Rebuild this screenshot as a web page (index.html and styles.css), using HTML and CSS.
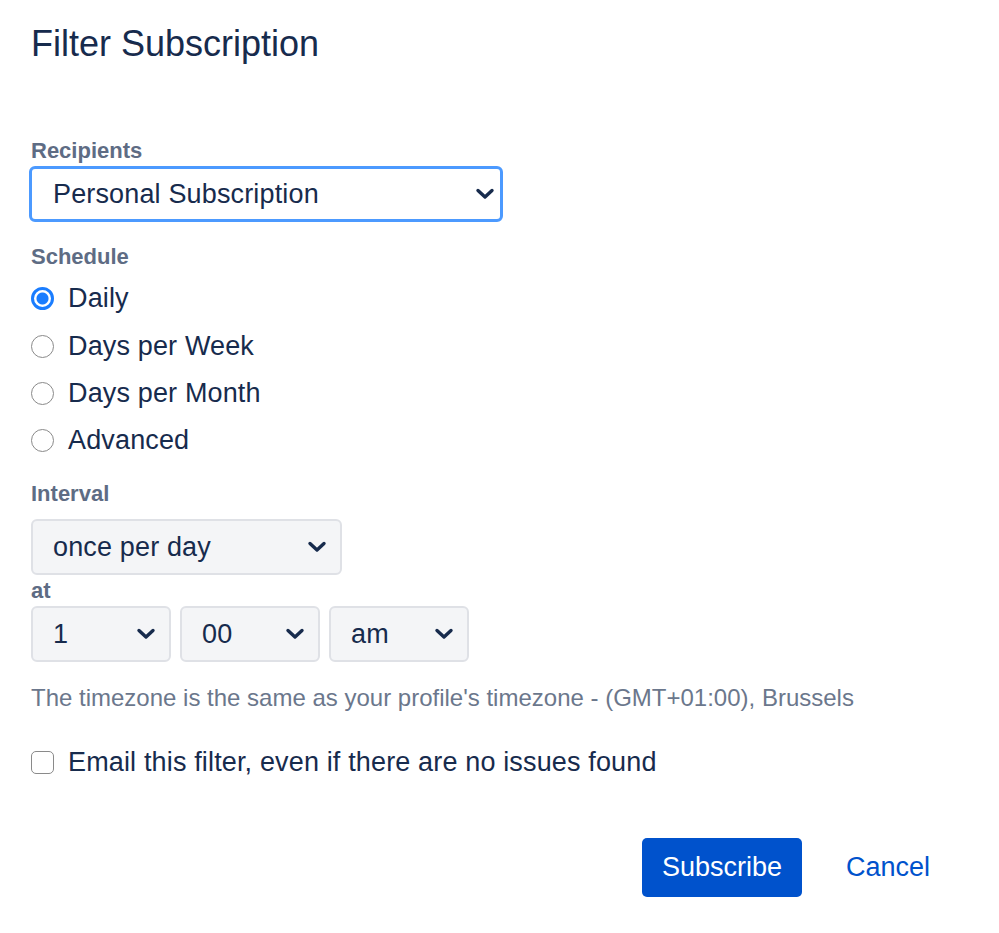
FILE: index.html
```html
<!DOCTYPE html>
<html lang="en">
<head>
    <meta charset="UTF-8">
    <meta name="viewport" content="width=device-width, initial-scale=1.0">
    <title>Filter Subscription</title>
    <link rel="stylesheet" href="styles.css">
</head>
<body>
    <h1 class="title">Filter Subscription</h1>

    <form class="sub-form">
        <label class="field-label label-recipients" for="recipients">Recipients</label>
        <div class="select-wrap select-wide">
            <select id="recipients" class="select focused">
                <option>Personal Subscription</option>
            </select>
            <svg class="chevron" viewBox="0 0 20 12" width="20" height="12"><path d="M3 2.5 L10 9 L17 2.5" fill="none" stroke="#172b4d" stroke-width="3.4" stroke-linecap="round" stroke-linejoin="round"/></svg>
        </div>

        <div class="field-label label-schedule">Schedule</div>
        <div class="radio-list">
            <label class="radio-row"><input type="radio" name="schedule" checked> Daily</label>
            <label class="radio-row"><input type="radio" name="schedule"> Days per Week</label>
            <label class="radio-row"><input type="radio" name="schedule"> Days per Month</label>
            <label class="radio-row"><input type="radio" name="schedule"> Advanced</label>
        </div>

        <label class="field-label label-interval" for="interval">Interval</label>
        <div class="select-wrap select-interval">
            <select id="interval" class="select">
                <option>once per day</option>
            </select>
            <svg class="chevron" viewBox="0 0 20 12" width="20" height="12"><path d="M3 2.5 L10 9 L17 2.5" fill="none" stroke="#172b4d" stroke-width="3.4" stroke-linecap="round" stroke-linejoin="round"/></svg>
        </div>

        <div class="field-label label-at">at</div>
        <div class="time-row">
            <div class="select-wrap select-time">
                <select class="select"><option>1</option></select>
                <svg class="chevron" viewBox="0 0 20 12" width="20" height="12"><path d="M3 2.5 L10 9 L17 2.5" fill="none" stroke="#172b4d" stroke-width="3.4" stroke-linecap="round" stroke-linejoin="round"/></svg>
            </div>
            <div class="select-wrap select-time">
                <select class="select"><option>00</option></select>
                <svg class="chevron" viewBox="0 0 20 12" width="20" height="12"><path d="M3 2.5 L10 9 L17 2.5" fill="none" stroke="#172b4d" stroke-width="3.4" stroke-linecap="round" stroke-linejoin="round"/></svg>
            </div>
            <div class="select-wrap select-time">
                <select class="select"><option>am</option></select>
                <svg class="chevron" viewBox="0 0 20 12" width="20" height="12"><path d="M3 2.5 L10 9 L17 2.5" fill="none" stroke="#172b4d" stroke-width="3.4" stroke-linecap="round" stroke-linejoin="round"/></svg>
            </div>
        </div>

        <p class="tz-note">The timezone is the same as your profile's timezone - (GMT+01:00), Brussels</p>

        <label class="check-row"><input type="checkbox"> Email this filter, even if there are no issues found</label>

        <div class="actions">
            <button type="submit" class="btn-primary">Subscribe</button>
            <a href="#" class="cancel-link">Cancel</a>
        </div>
    </form>
</body>
</html>
```

FILE: styles.css
```css
body {
    margin: 0;
    padding: 24px 31px 0 31px;
    font-family: "Liberation Sans", Arial, sans-serif;
    color: #172b4d;
    background: #fff;
}
.title {
    margin: 0;
    font-size: 36px;
    font-weight: normal;
    line-height: 40px;
    color: #172b4d;
}
.sub-form {
    display: flex;
    flex-direction: column;
    align-items: flex-start;
}
.field-label {
    font-size: 22px;
    font-weight: bold;
    line-height: 26px;
    color: #5e6c84;
}
.label-recipients {
    margin-top: 74px;
}
.label-schedule {
    margin-top: 22px;
}
.label-interval {
    margin-top: 16px;
}
.label-at {
    margin-top: 3px;
}
.select-wrap {
    position: relative;
    display: flex;
}
.select {
    appearance: none;
    -webkit-appearance: none;
    width: 100%;
    margin: 0;
    font-family: inherit;
    font-size: 27px;
    letter-spacing: 0.15px;
    color: #172b4d;
    background: #f4f5f7;
    border: 2px solid #dfe1e6;
    border-radius: 6px;
    padding: 0 50px 0 20px;
    outline: none;
}
.select.focused {
    background: #fff;
    border: 3px solid #4c9aff;
    padding-left: 21px;
}
.chevron {
    position: absolute;
    right: 15px;
    top: 50%;
    margin-top: -6px;
    pointer-events: none;
}
.select-wide {
    margin-top: 2px;
    margin-left: -2px;
    width: 474px;
    height: 56px;
}
.select-wide .chevron {
    right: 8px;
}
.select-interval {
    margin-top: 12px;
    width: 311px;
    height: 56px;
}
.time-row {
    display: flex;
    gap: 9px;
    margin-top: 2px;
}
.select-time {
    width: 140px;
    height: 56px;
}
.radio-list {
    display: flex;
    flex-direction: column;
    margin-top: 5px;
}
.radio-row {
    display: flex;
    align-items: center;
    gap: 14px;
    height: 47.4px;
    font-size: 27px;
    letter-spacing: 0.15px;
    color: #172b4d;
}
.radio-row input {
    appearance: none;
    -webkit-appearance: none;
    width: 23px;
    height: 23px;
    margin: 0;
    border: 1.5px solid #8a8a8a;
    border-radius: 50%;
    background: #fff;
}
.radio-row input:checked {
    border: 3px solid #1a7dff;
    background: radial-gradient(circle, #1a7dff 0 5.5px, #fff 6.5px);
}
.tz-note {
    margin: 22px 0 0 0;
    font-size: 24px;
    line-height: 28px;
    color: #6b778c;
}
.check-row {
    display: flex;
    align-items: center;
    gap: 14px;
    height: 30px;
    margin-top: 36px;
    font-size: 27px;
    letter-spacing: 0.15px;
    color: #172b4d;
}
.check-row input {
    appearance: none;
    -webkit-appearance: none;
    width: 23px;
    height: 23px;
    margin: 0;
    border: 1.5px solid #8a8a8a;
    border-radius: 5px;
    background: #fff;
}
.actions {
    align-self: stretch;
    display: flex;
    justify-content: flex-end;
    align-items: center;
    margin-top: 60px;
}
.btn-primary {
    height: 59px;
    width: 160px;
    padding: 0;
    font-family: inherit;
    font-size: 27px;
    color: #fff;
    background-color: #0052cc;
    border: none;
    border-radius: 5px;
    cursor: pointer;
}
.cancel-link {
    padding: 0 38px 0 44px;
    font-size: 27px;
    color: #0052cc;
    text-decoration: none;
}
```
